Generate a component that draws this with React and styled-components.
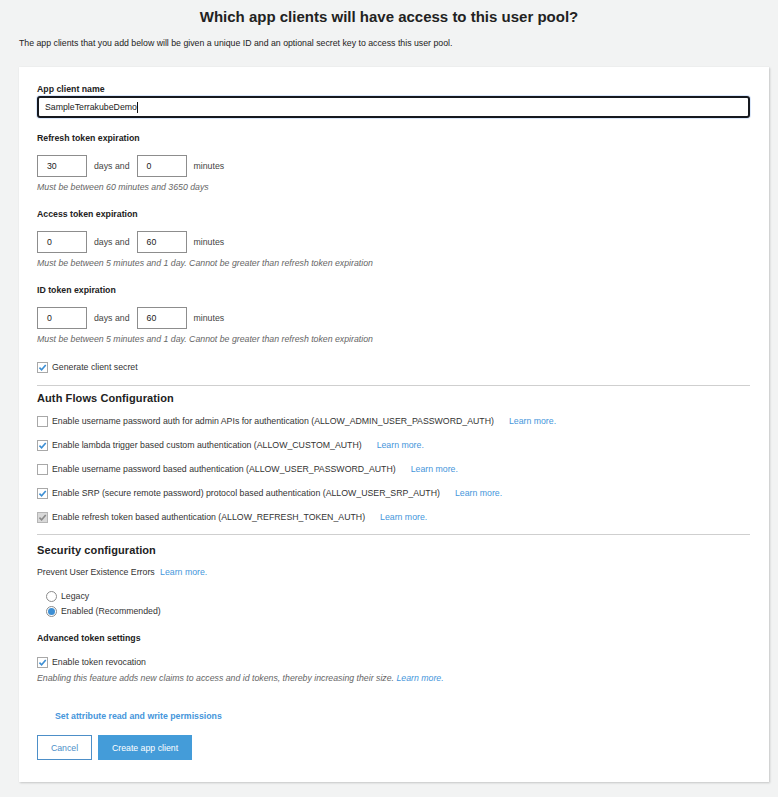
import React from "react";
import styled, { createGlobalStyle } from "styled-components";

const Global = createGlobalStyle`
  html, body { margin: 0; padding: 0; background: #f2f3f3; }
  body { font-family: "Liberation Sans", Arial, sans-serif; color: #16191f; }
  * { box-sizing: border-box; }
`;

const FS = "8.75px";

const Page = styled.div`
  padding: 7px 19px 14px 19px;
  width: 778px;
`;

const Title = styled.h1`
  margin: 0;
  text-align: center;
  font-size: 15px;
  line-height: 20px;
  font-weight: 700;
  color: #222;
`;

const Sub = styled.p`
  margin: 10px 0 0 0;
  font-size: ${FS};
  line-height: 12px;
  color: #222;
`;

const Card = styled.div`
  margin-top: 18px;
  width: 750px;
  background: #fff;
  padding: 16px 19px 22px 18px;
  box-shadow: 1px 1px 2px rgba(0, 0, 0, 0.18), 0 0 1px rgba(0, 0, 0, 0.06);
`;

const Label = styled.div`
  font-size: ${FS};
  line-height: 12px;
  font-weight: 700;
  color: #222;
  margin-top: ${(p) => p.$mt || 0}px;
`;

const NameInput = styled.div`
  margin-top: 1px;
  height: 22px;
  border: 2px solid #16191f;
  border-radius: 3px;
  box-shadow: 0 0 0 1px #dbe8fb;
  display: flex;
  align-items: center;
  padding-left: 6px;
  font-size: ${FS};
  color: #222;
`;

const Caret = styled.span`
  display: inline-block;
  width: 1px;
  height: 11px;
  background: #111;
`;

const DurRow = styled.div`
  margin-top: 11px;
  display: flex;
  align-items: center;
  gap: 7px;
  font-size: ${FS};
  color: #444;
`;

const SmallBox = styled.div`
  width: 50px;
  height: 22px;
  border: 1px solid #8d8d8d;
  display: flex;
  align-items: center;
  padding-left: 9px;
  font-size: ${FS};
  color: #222;
`;

const Hint = styled.div`
  margin-top: ${(p) => p.$mt ?? 4}px;
  font-size: ${FS};
  line-height: 12px;
  font-style: italic;
  color: #666;
`;

const CheckRow = styled.div`
  margin-top: ${(p) => p.$mt || 0}px;
  display: flex;
  align-items: center;
  height: 14px;
  font-size: ${FS};
  color: #333;
`;

const Box = styled.span`
  width: 11px;
  height: 11px;
  border: 1px solid ${(p) => (p.$disabled ? "#b5b5b5" : "#a8a8a8")};
  background: ${(p) => (p.$disabled ? "#d9d9d9" : "#fff")};
  display: inline-flex;
  align-items: center;
  justify-content: center;
  margin-right: 4px;
  flex: none;
`;

const Link = styled.a`
  color: #4596db;
  text-decoration: none;
  margin-left: ${(p) => p.$ml || 0}px;
  font-style: ${(p) => (p.$italic ? "italic" : "normal")};
`;

const Divider = styled.div`
  margin-top: ${(p) => p.$mt || 0}px;
  height: 1px;
  background: #cfcfcf;
`;

const Heading = styled.div`
  margin-top: ${(p) => p.$mt || 0}px;
  font-size: 11px;
  line-height: 15px;
  font-weight: 600;
  color: #222;
  letter-spacing: 0.1px;
`;

const Para = styled.div`
  margin-top: ${(p) => p.$mt || 0}px;
  font-size: ${FS};
  line-height: 12px;
  color: #333;
`;

const RadioGroup = styled.div`
  margin-top: 11px;
  padding-left: 9px;
  display: flex;
  flex-direction: column;
  gap: 1px;
`;

const RadioRow = styled.div`
  display: flex;
  align-items: center;
  height: 14px;
  font-size: ${FS};
  color: #333;
`;

const Radio = styled.span`
  width: 11px;
  height: 11px;
  border-radius: 50%;
  border: 1px solid #8c8c8c;
  background: #fff;
  margin-right: 4px;
  display: inline-flex;
  align-items: center;
  justify-content: center;
  &::after {
    content: "";
    display: ${(p) => (p.$on ? "block" : "none")};
    width: 7px;
    height: 7px;
    border-radius: 50%;
    background: #3d8fd4;
  }
`;

const BoldLink = styled.div`
  margin-top: 26px;
  padding-left: 18px;
  font-size: ${FS};
  line-height: 12px;
  font-weight: 700;
  color: #4596db;
`;

const Buttons = styled.div`
  margin-top: 13px;
  display: flex;
  gap: 6px;
`;

const Button = styled.button`
  height: 25px;
  width: ${(p) => p.$w}px;
  font-family: "Liberation Sans", Arial, sans-serif;
  font-size: ${FS};
  padding: 0;
  cursor: pointer;
  border: 1px solid ${(p) => (p.$primary ? "#449cd9" : "#4d8fc8")};
  background: ${(p) => (p.$primary ? "#449cd9" : "#fff")};
  color: ${(p) => (p.$primary ? "#fff" : "#4d8fc8")};
`;

const Check = ({ color = "#3d8fd4" }) => (
  <svg width="9" height="9" viewBox="0 0 10 10">
    <path d="M1.6 5.2 L4 7.6 L8.6 2.2" fill="none" stroke={color} strokeWidth="1.8" />
  </svg>
);

const CheckBox = ({ checked, disabled }) => (
  <Box $disabled={disabled}>{checked && <Check color={disabled ? "#8a8a8a" : "#3d8fd4"} />}</Box>
);

const Duration = ({ days, minutes }) => (
  <DurRow>
    <SmallBox>{days}</SmallBox>
    <span>days and</span>
    <SmallBox>{minutes}</SmallBox>
    <span>minutes</span>
  </DurRow>
);

const flows = [
  { text: "Enable username password auth for admin APIs for authentication (ALLOW_ADMIN_USER_PASSWORD_AUTH)", checked: false },
  { text: "Enable lambda trigger based custom authentication (ALLOW_CUSTOM_AUTH)", checked: true },
  { text: "Enable username password based authentication (ALLOW_USER_PASSWORD_AUTH)", checked: false },
  { text: "Enable SRP (secure remote password) protocol based authentication (ALLOW_USER_SRP_AUTH)", checked: true },
  { text: "Enable refresh token based authentication (ALLOW_REFRESH_TOKEN_AUTH)", checked: true, disabled: true },
];

export default function App() {
  return (
    <>
      <Global />
      <Page>
        <Title>Which app clients will have access to this user pool?</Title>
        <Sub>The app clients that you add below will be given a unique ID and an optional secret key to access this user pool.</Sub>
        <Card>
          <Label>App client name</Label>
          <NameInput>
            SampleTerrakubeDemo
            <Caret />
          </NameInput>

          <Label $mt={14}>Refresh token expiration</Label>
          <Duration days="30" minutes="0" />
          <Hint>Must be between 60 minutes and 3650 days</Hint>

          <Label $mt={15}>Access token expiration</Label>
          <Duration days="0" minutes="60" />
          <Hint>Must be between 5 minutes and 1 day. Cannot be greater than refresh token expiration</Hint>

          <Label $mt={15}>ID token expiration</Label>
          <Duration days="0" minutes="60" />
          <Hint>Must be between 5 minutes and 1 day. Cannot be greater than refresh token expiration</Hint>

          <CheckRow $mt={15}>
            <CheckBox checked />
            Generate client secret
          </CheckRow>

          <Divider $mt={11} />
          <Heading $mt={5}>Auth Flows Configuration</Heading>
          {flows.map((f, i) => (
            <CheckRow key={i} $mt={i === 0 ? 8 : 10}>
              <CheckBox checked={f.checked} disabled={f.disabled} />
              {f.text}
              <Link $ml={15}>Learn more.</Link>
            </CheckRow>
          ))}

          <Divider $mt={10} />
          <Heading $mt={8}>Security configuration</Heading>
          <Para $mt={8}>
            Prevent User Existence Errors <Link $ml={3}>Learn more.</Link>
          </Para>
          <RadioGroup>
            <RadioRow>
              <Radio />
              Legacy
            </RadioRow>
            <RadioRow>
              <Radio $on />
              Enabled (Recommended)
            </RadioRow>
          </RadioGroup>

          <Label $mt={14}>Advanced token settings</Label>
          <CheckRow $mt={11}>
            <CheckBox checked />
            Enable token revocation
          </CheckRow>
          <Hint $mt={3}>
            Enabling this feature adds new claims to access and id tokens, thereby increasing their size.{" "}
            <Link $italic>Learn more.</Link>
          </Hint>

          <BoldLink>Set attribute read and write permissions</BoldLink>
          <Buttons>
            <Button $w={55}>Cancel</Button>
            <Button $w={94} $primary>Create app client</Button>
          </Buttons>
        </Card>
      </Page>
    </>
  );
}
